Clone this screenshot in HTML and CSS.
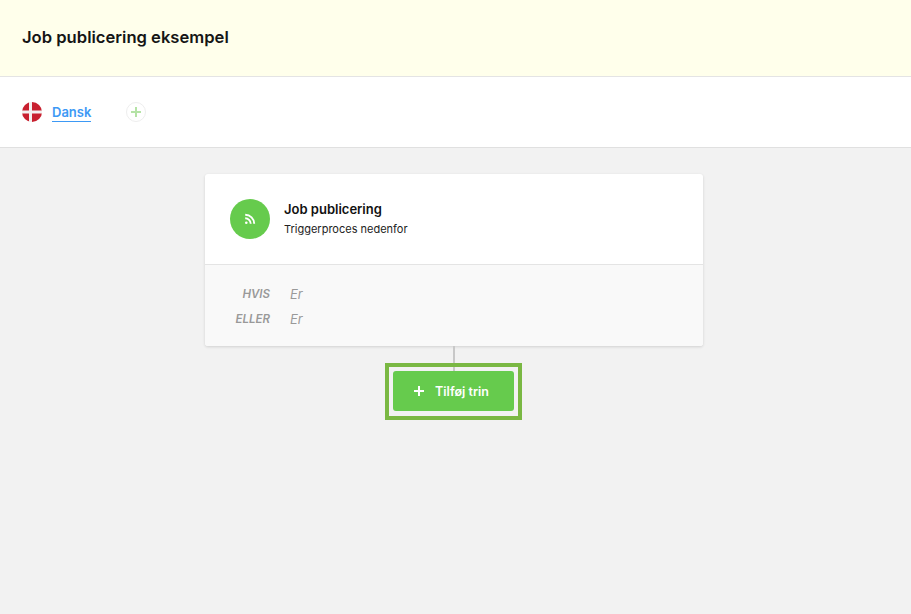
FILE: index.html
```html
<!DOCTYPE html>
<html lang="da">
<head>
<meta charset="utf-8">
<title>Job publicering eksempel</title>
<link rel="stylesheet" href="styles.css">
</head>
<body>
<header class="topbar"><h1 class="title">Job publicering eksempel</h1></header>
<nav class="langbar">
  <svg class="flag" width="20" height="20" viewBox="0 0 20 20" aria-hidden="true">
    <circle cx="10" cy="10" r="10" fill="#c8202f"/>
    <path d="M7 0h3v8.500h10v3H10V20H7v-8.500H0v-3h7z" fill="#f3f1f1"/>
  </svg>
  <a class="lang" href="#">Dansk</a>
  <button class="addlang" type="button" aria-label="Tilføj sprog">
    <svg width="10" height="10" viewBox="0 0 10 10" aria-hidden="true"><path d="M5 0v10M0 5h10" stroke="#b5e3a6" stroke-width="2"/></svg>
  </button>
</nav>
<main class="canvas">
  <section class="card">
    <div class="card-head">
      <span class="badge">
        <svg width="12" height="12" viewBox="0 0 12 12" aria-hidden="true">
          <circle cx="2.300" cy="9.700" r="1.300" fill="#fff"/>
          <path d="M1.200 5.300a5.500 5.500 0 0 1 5.500 5.500M1.200 1.800a9 9 0 0 1 9 9" fill="none" stroke="#fff" stroke-width="1.900"/>
        </svg>
      </span>
      <div class="head-text">
        <h2 class="card-title">Job publicering</h2>
        <p class="card-sub">Triggerproces nedenfor</p>
      </div>
    </div>
    <div class="card-body">
      <div class="rule"><span class="rule-key">HVIS</span><span class="rule-val">Er</span></div>
      <div class="rule"><span class="rule-key">ELLER</span><span class="rule-val">Er</span></div>
    </div>
  </section>
  <div class="connector"></div>
  <div class="step-frame">
    <button class="add-step" type="button">
      <svg width="10" height="10" viewBox="0 0 10 10" aria-hidden="true"><path d="M5 0v10M0 5h10" stroke="#fff" stroke-width="2"/></svg>
      Tilføj trin
    </button>
  </div>
</main>
</body>
</html>
```

FILE: styles.css
```css
* { box-sizing: border-box; }
html, body { height: 100%; }
body {
  margin: 0;
  display: flex;
  flex-direction: column;
  overflow: hidden;
  background: #f2f2f2;
  color: #111;
  font-family: Inter, Lato, sans-serif;
}
.topbar {
  height: 77px;
  padding: 0 22px;
  display: flex;
  align-items: center;
  background: #ffffeb;
  border-bottom: 1px solid #e4e4e4;
}
.title { margin: 0 0 2px; font-size: 16.600px; font-weight: 600; color: #151515; }
.langbar {
  height: 71px;
  padding: 0 22px;
  display: flex;
  align-items: center;
  background: #fff;
  border-bottom: 1px solid #e0e0e0;
}
.flag { display: block; }
.lang {
  margin-left: 10px;
  margin-top: 1px;
  padding-bottom: 1px;
  font-size: 13px;
  font-weight: 600;
  line-height: 16px;
  color: #3d99f5;
  text-decoration: none;
  border-bottom: 1px solid #3d99f5;
}
.addlang {
  width: 20px;
  height: 20px;
  margin-left: 35px;
  padding: 0;
  display: flex;
  align-items: center;
  justify-content: center;
  background: #fff;
  border: 1px solid #eeeeee;
  border-radius: 50%;
}
.canvas {
  flex: 1;
  padding: 26px 3px 0 0;
  display: flex;
  flex-direction: column;
  align-items: center;
}
.card {
  width: 498px;
  height: 172px;
  flex: none;
  background: #fff;
  border-radius: 3px;
  box-shadow: 0 1px 3px rgba(0, 0, 0, 0.14);
  overflow: hidden;
}
.card-head {
  height: 91px;
  padding: 0 25px 1px;
  display: flex;
  align-items: center;
  border-bottom: 1px solid #e4e4e4;
}
.badge {
  width: 40px;
  height: 40px;
  display: flex;
  align-items: center;
  justify-content: center;
  background: #66cb4d;
  border-radius: 50%;
}
.head-text { margin-left: 14px; }
.card-title { margin: 0 0 5px; font-size: 13px; line-height: 16px; font-weight: 600; color: #111; }
.card-sub { margin: 0; font-size: 11px; line-height: 14px; color: #222; }
.card-body {
  height: 81px;
  padding-top: 16px;
  background: #f9f9f9;
}
.rule {
  height: 25px;
  display: flex;
  align-items: center;
  font-style: italic;
  color: #999;
}
.rule-key { width: 65px; text-align: right; font-size: 11.500px; font-weight: 600; }
.rule-val { margin-left: 20px; font-size: 13px; }
.connector { width: 2px; height: 25px; flex: none; background: #c8c8c8; }
.step-frame {
  position: relative;
  margin: -8px 1px 0 0;
  padding: 4px 4px 5px;
  flex: none;
  border: 4px solid #7ab843;
}
.add-step {
  width: 121px;
  height: 40px;
  padding: 0 4px 0 0;
  display: flex;
  align-items: center;
  justify-content: center;
  gap: 11px;
  font: 600 12.500px Inter, Lato, sans-serif;
  color: #fff;
  background: #66cb4d;
  border: 0;
  border-radius: 3px;
}
```
